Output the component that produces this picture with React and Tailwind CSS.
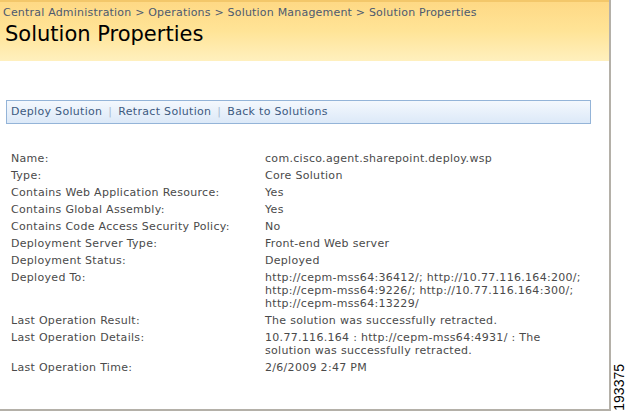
const rows = [
  ['Name:', ['com.cisco.agent.sharepoint.deploy.wsp']],
  ['Type:', ['Core Solution']],
  ['Contains Web Application Resource:', ['Yes']],
  ['Contains Global Assembly:', ['Yes']],
  ['Contains Code Access Security Policy:', ['No']],
  ['Deployment Server Type:', ['Front-end Web server']],
  ['Deployment Status:', ['Deployed']],
  [
    'Deployed To:',
    [
      'http://cepm-mss64:36412/; http://10.77.116.164:200/;',
      'http://cepm-mss64:9226/; http://10.77.116.164:300/;',
      'http://cepm-mss64:13229/',
    ],
  ],
  ['Last Operation Result:', ['The solution was successfully retracted.']],
  [
    'Last Operation Details:',
    ['10.77.116.164 : http://cepm-mss64:4931/ : The', 'solution was successfully retracted.'],
  ],
  ['Last Operation Time:', ['2/6/2009 2:47 PM']],
]

export default function App() {
  return (
    <div
      className="flex h-[415px] w-[627px] overflow-hidden bg-white"
      style={{ fontFamily: '"DejaVu Sans", sans-serif' }}
    >
      <div className="flex h-[411px] w-[611px] flex-col border-r-2 border-b-2 border-[#b4b0a8]">
        <div className="h-[61px] border-t-2 border-[#f3c76a] bg-gradient-to-b from-[#fed985] via-[#ffe497] to-[#fff0be] pl-[3px] pt-[4px]">
          <div className="text-[11px] leading-[14px] tracking-[0.2px] text-[#4d5a70]">
            Central Administration &gt; Operations &gt; Solution Management &gt; Solution Properties
          </div>
          <div className="pl-[2px] pt-[1px] text-[21px] leading-[27px] text-black">Solution Properties</div>
        </div>

        <div className="ml-[6px] mt-[39px] flex h-[24px] w-[585px] items-center border border-[#94b4d8] bg-gradient-to-b from-[#f4f8fd] to-[#dce9f8] pl-[4px] text-[11px] tracking-[0.3px] text-[#3d5a80]">
          <span>Deploy Solution</span>
          <span className="mx-[6px] text-[#a8bcd4]">|</span>
          <span>Retract Solution</span>
          <span className="mx-[6px] text-[#a8bcd4]">|</span>
          <span>Back to Solutions</span>
        </div>

        <div className="mt-[28px] flex flex-col pl-[11px] text-[11px] tracking-[0.3px] text-[#4a4a4a]">
          {rows.map(([label, lines]) => (
            <div key={label} className="flex pb-[4px] leading-[13px]">
              <div className="w-[254px] shrink-0">{label}</div>
              <div className="flex flex-col">
                {lines.map((l) => (
                  <div key={l} className="whitespace-nowrap">
                    {l}
                  </div>
                ))}
              </div>
            </div>
          ))}
        </div>
      </div>
      <div className="flex flex-1 items-end justify-center pb-[4px]">
        <div
          className="text-[14px] leading-none text-black"
          style={{ writingMode: 'vertical-rl', transform: 'rotate(180deg)', fontFamily: '"Liberation Sans", sans-serif' }}
        >
          193375
        </div>
      </div>
    </div>
  )
}
